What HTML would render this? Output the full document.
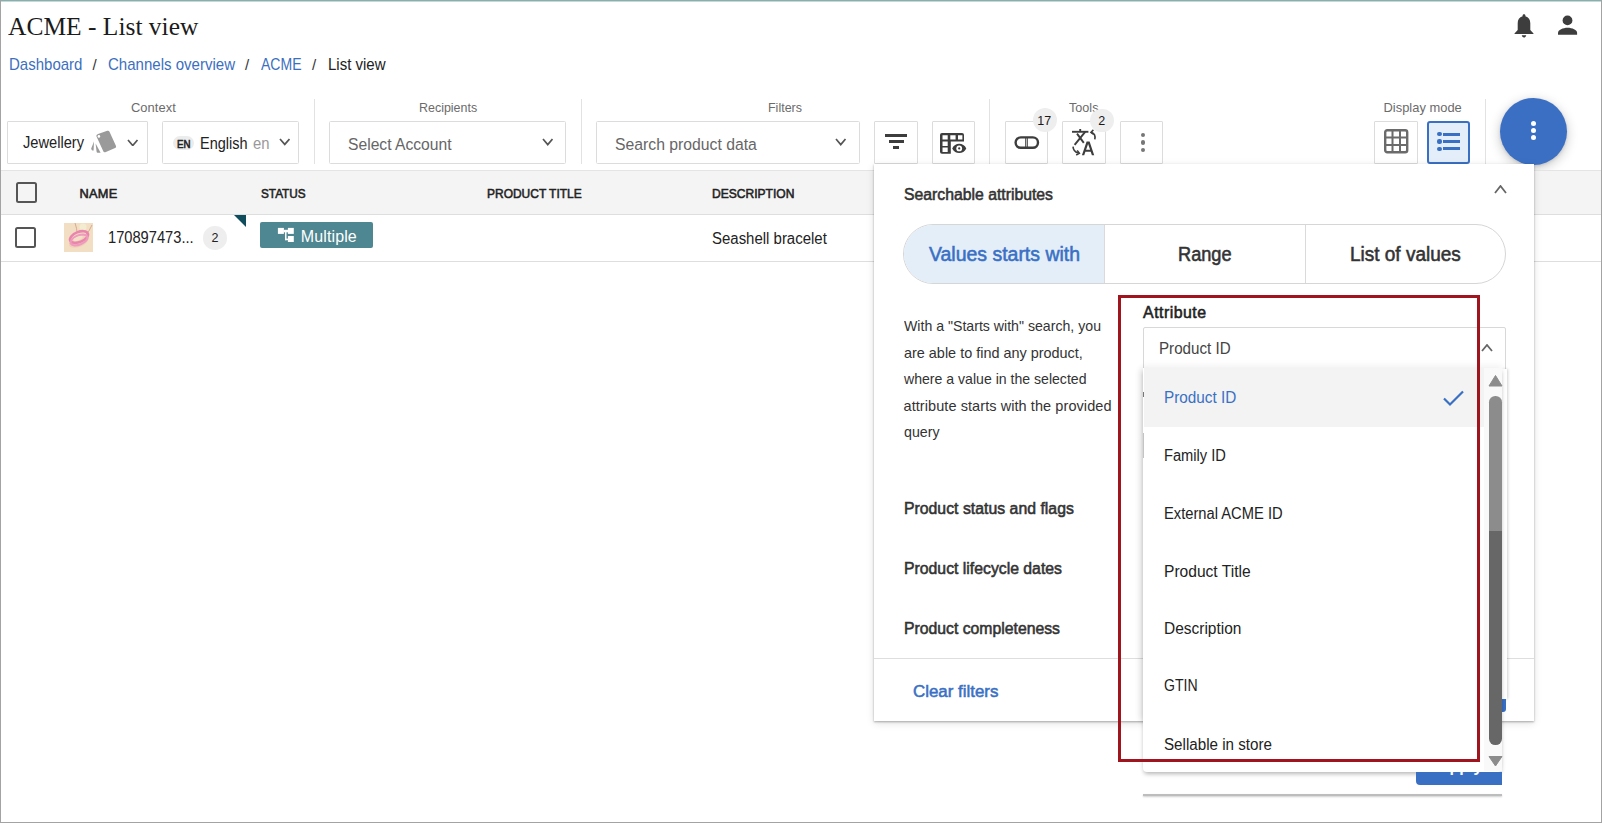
<!DOCTYPE html>
<html><head><meta charset="utf-8"><style>
html,body{margin:0;padding:0;}
body{width:1602px;height:823px;position:relative;overflow:hidden;background:#fff;font-family:"Liberation Sans", sans-serif;}
.t{position:absolute;white-space:nowrap;line-height:1;}
.r{position:absolute;}
#frame{position:absolute;left:0;top:0;width:1602px;height:823px;box-sizing:border-box;border:1px solid #a3a3a3;pointer-events:none;}
</style></head><body>
<div class="r" style="left:1px;top:1px;width:1600px;height:1px;background:#ade3e3"></div>
<div class="t" style="left:8px;top:14.01px;font-size:26.2px;color:#1b1b1b;font-family:'Liberation Serif', serif;transform:scaleX(0.9731);transform-origin:0 0;">ACME - List view</div>
<div class="t" style="left:8.5px;top:56.56px;font-size:15.7px;color:#3b6fc0;transform:scaleX(0.9569);transform-origin:0 0;">Dashboard</div>
<div class="t" style="left:92.5px;top:57.15px;font-size:15px;color:#333;">/</div>
<div class="t" style="left:108.4px;top:56.56px;font-size:15.7px;color:#3b6fc0;transform:scaleX(0.9589);transform-origin:0 0;">Channels overview</div>
<div class="t" style="left:245px;top:57.15px;font-size:15px;color:#333;">/</div>
<div class="t" style="left:261.4px;top:56.56px;font-size:15.7px;color:#3b6fc0;transform:scaleX(0.8950);transform-origin:0 0;">ACME</div>
<div class="t" style="left:312px;top:57.15px;font-size:15px;color:#333;">/</div>
<div class="t" style="left:328px;top:56.56px;font-size:15.7px;color:#222;transform:scaleX(0.9568);transform-origin:0 0;">List view</div>
<svg class="r" style="left:1510px;top:12px" width="28" height="28" viewBox="0 0 28 28"><path fill="#3d3d3d" d="M14 2.2c-0.9 0-1.4 0.6-1.4 1.4v0.7c-3.3 0.8-4.9 3.6-4.9 7v6.6l-3.2 3.6v0.5h19v-0.5l-3.2-3.6v-6.6c0-3.4-1.7-6.2-4.9-7v-0.7c0-0.8-0.5-1.4-1.4-1.4zM11.8 23.3c0 1.2 1 2.3 2.2 2.3s2.2-1.1 2.2-2.3z"/></svg>
<svg class="r" style="left:1556px;top:14px" width="24" height="24" viewBox="0 0 24 24"><circle cx="11.5" cy="6.4" r="4.9" fill="#3d3d3d"/><path fill="#3d3d3d" d="M2 20.8v-1.8c0-3 5-5.2 9.6-5.2s9.5 2.2 9.5 5.2v1.8z"/></svg>
<div class="t" style="left:131px;top:101.93px;font-size:12.9px;color:#6b6b6b;letter-spacing:0.057px;">Context</div>
<div class="t" style="left:418.7px;top:101.93px;font-size:12.9px;color:#6b6b6b;transform:scaleX(0.9663);transform-origin:0 0;">Recipients</div>
<div class="t" style="left:768.4px;top:101.93px;font-size:12.9px;color:#6b6b6b;transform:scaleX(0.9682);transform-origin:0 0;">Filters</div>
<div class="t" style="left:1069px;top:101.93px;font-size:12.9px;color:#6b6b6b;transform:scaleX(0.9796);transform-origin:0 0;">Tools</div>
<div class="t" style="left:1383.5px;top:101.63px;font-size:12.9px;color:#6b6b6b;letter-spacing:0.013px;">Display mode</div>
<div class="r" style="left:314px;top:99px;width:1px;height:65px;background:#e2e2e2"></div>
<div class="r" style="left:581px;top:99px;width:1px;height:65px;background:#e2e2e2"></div>
<div class="r" style="left:989px;top:99px;width:1px;height:65px;background:#e2e2e2"></div>
<div class="r" style="left:1485px;top:99px;width:1px;height:65px;background:#e2e2e2"></div>
<div class="r" style="left:7px;top:121px;width:141px;height:43px;border:1px solid #dcdcdc;box-sizing:border-box;border-radius:1px"></div>
<div class="t" style="left:23px;top:134.81px;font-size:16px;color:#222;transform:scaleX(0.9147);transform-origin:0 0;">Jewellery</div>
<svg class="r" style="left:85px;top:125px" width="35" height="32" viewBox="85 125 35 32"><g fill="#9a9a9a">
<path d="M98 133.9 L107.3 130.8 Q108.9 130.3 109.5 131.8 L116 146 Q116.6 147.5 115.1 148.1 L105.3 152.2 Q103.8 152.7 103.3 151.2 L96.4 136.2 Q95.9 134.6 98 133.9Z"/>
<path d="M95.6 143.5 L100.6 152.8 L97.6 152.8 Q96.8 152.6 96.6 151.8Z"/>
<path d="M94 141.5 L93.6 150.5 Q92.9 150.8 92 150.2 Q91 149.5 91.2 148.6Z"/>
</g><circle cx="98.9" cy="136.4" r="1.3" fill="#fff"/></svg>
<div class="r" style="left:162px;top:121px;width:137px;height:43px;border:1px solid #dcdcdc;box-sizing:border-box;border-radius:1.5px"></div>
<div class="r" style="left:173px;top:136px;width:21px;height:14px;background:#ececec;border-radius:7px"></div>
<div class="t" style="left:176.5px;top:138.98px;font-size:10.6px;color:#222;-webkit-text-stroke:0.55px currentColor;transform:scaleX(0.9168);transform-origin:0 0;">EN</div>
<div class="t" style="left:199.5px;top:135.81px;font-size:16px;color:#222;transform:scaleX(0.9051);transform-origin:0 0;">English</div>
<div class="t" style="left:252.5px;top:135.81px;font-size:16px;color:#999;transform:scaleX(0.9271);transform-origin:0 0;">en</div>
<div class="r" style="left:329px;top:121px;width:237px;height:43px;border:1px solid #dcdcdc;box-sizing:border-box;border-radius:1.5px"></div>
<div class="t" style="left:348.3px;top:136.05px;font-size:16.3px;color:#666;transform:scaleX(0.9617);transform-origin:0 0;">Select Account</div>
<div class="r" style="left:596px;top:121px;width:264px;height:43px;border:1px solid #dcdcdc;box-sizing:border-box;border-radius:1.5px"></div>
<div class="t" style="left:615px;top:135.95px;font-size:16.3px;color:#666;transform:scaleX(0.9673);transform-origin:0 0;">Search product data</div>
<svg class="r" style="left:127px;top:138.5px" width="11.5" height="7.5" viewBox="0 0 11.5 7.5"><path d="M1 1 L5.75 6.5 L10.5 1" fill="none" stroke="#555" stroke-width="1.7"/></svg>
<svg class="r" style="left:278.5px;top:138.2px" width="11.5" height="7.4" viewBox="0 0 11.5 7.4"><path d="M1 1 L5.75 6.4 L10.5 1" fill="none" stroke="#555" stroke-width="1.7"/></svg>
<svg class="r" style="left:541.8px;top:138.4px" width="11.5" height="7.6" viewBox="0 0 11.5 7.6"><path d="M1 1 L5.75 6.6 L10.5 1" fill="none" stroke="#555" stroke-width="1.7"/></svg>
<svg class="r" style="left:835.2px;top:138.1px" width="11.5" height="7.6" viewBox="0 0 11.5 7.6"><path d="M1 1 L5.75 6.6 L10.5 1" fill="none" stroke="#555" stroke-width="1.7"/></svg>
<div class="r" style="left:874px;top:121px;width:44px;height:43px;border:1px solid #dcdcdc;box-sizing:border-box;border-radius:1px"></div>
<div class="r" style="left:932px;top:121px;width:43px;height:43px;border:1px solid #dcdcdc;box-sizing:border-box;border-radius:1px"></div>
<div class="r" style="left:1005px;top:121px;width:43px;height:43px;border:1px solid #dcdcdc;box-sizing:border-box;border-radius:1px"></div>
<div class="r" style="left:1062px;top:121px;width:44px;height:43px;border:1px solid #dcdcdc;box-sizing:border-box;border-radius:1px"></div>
<div class="r" style="left:1120px;top:121px;width:43px;height:43px;border:1px solid #dcdcdc;box-sizing:border-box;border-radius:1px"></div>
<div class="r" style="left:1374px;top:121px;width:44px;height:43px;border:1px solid #dcdcdc;box-sizing:border-box;border-radius:1px"></div>
<div class="r" style="left:1427px;top:121px;width:43px;height:43px;border:2px solid #3a70c4;box-sizing:border-box;border-radius:3px;background:#e4eefa"></div>
<div class="r" style="left:885px;top:134px;width:22px;height:2.6px;background:#3d3d3d"></div>
<div class="r" style="left:888.5px;top:140.2px;width:15px;height:2.6px;background:#3d3d3d"></div>
<div class="r" style="left:893.3px;top:146.4px;width:5.5px;height:2.6px;background:#3d3d3d"></div>
<svg class="r" style="left:940px;top:133px" width="28" height="21" viewBox="0 0 28 21">
<path fill="#3d3d3d" d="M2 0h20a2 2 0 0 1 2 2v6.5h-13.2v12.3h-8.8a2 2 0 0 1-2-2v-16.8a2 2 0 0 1 2-2z M2.5 2.2v4.3h5.2v-4.3z M10.3 2.2v4.3h5.3v-4.3z M18 2.2v4.3h4.4v-4.3z M2.5 8.6v4.3h5.2v-4.3z M2.5 14.6v4.3h5.2v-4.3z"/>
<path fill="#3d3d3d" d="M12.2 15.4c1.5-3 4-4.6 7-4.6s5.6 1.6 7.1 4.6c-1.5 3-4.1 4.6-7.1 4.6s-5.5-1.6-7-4.6z"/>
<circle cx="19.2" cy="15.4" r="2.9" fill="#fff"/><circle cx="19.2" cy="15.4" r="1.1" fill="#3d3d3d"/>
</svg>
<svg class="r" style="left:1013px;top:135px" width="27" height="15" viewBox="0 0 27 15"><rect x="2.6" y="2.4" width="22.4" height="10.4" rx="5.2" fill="none" stroke="#3d3d3d" stroke-width="2.4"/><rect x="12.2" y="2" width="1" height="11" fill="#3d3d3d"/><rect x="13.8" y="2" width="1" height="11" fill="#3d3d3d"/></svg>
<svg class="r" style="left:1060px;top:105px" width="60" height="60" viewBox="1060 105 60 60">
<g fill="none" stroke="#3d3d3d" stroke-width="1.9" stroke-linecap="butt">
<path d="M1072 131.8h16.4"/><path d="M1080.2 129v2.8"/>
<path d="M1085.2 131.8L1074.6 144.8"/><path d="M1077 133.6L1083.8 142.9"/>
<path d="M1091.4 132.4c2.6 0.8 4.2 3.2 3.4 6.9" stroke-width="1.6"/>
<path d="M1073 146.6c0.2 3.2 2.4 5.6 5.6 6.5" stroke-width="1.6"/>
</g>
<path fill="none" stroke="#3d3d3d" stroke-width="1.5" d="M1093.4 129.9L1090.9 132.4L1093.6 134.4"/>
<path fill="none" stroke="#3d3d3d" stroke-width="1.5" d="M1077.2 150.4L1079.4 153.3L1076.2 155"/>
<path fill="#3d3d3d" d="M1086.6 141.4h3l4.6 13.9h-2.3l-1.2 -3.6h-5.3l-1.2 3.6h-2.3zM1088.1 144.1l-2 5.7h4z"/>
</svg>
<div class="r" style="left:1140.8px;top:133.0px;width:4.4px;height:4.4px;background:#777;border-radius:50%"></div>
<div class="r" style="left:1140.8px;top:140.3px;width:4.4px;height:4.4px;background:#777;border-radius:50%"></div>
<div class="r" style="left:1140.8px;top:147.60000000000002px;width:4.4px;height:4.4px;background:#777;border-radius:50%"></div>
<div class="r" style="left:1032.5px;top:108.3px;width:24px;height:24px;background:#eeeeee;border-radius:50%"></div>
<div class="t" style="left:1037.3px;top:114.77px;font-size:12.5px;color:#1a1a1a;">17</div>
<div class="r" style="left:1090px;top:108.8px;width:23.6px;height:23.6px;background:#eeeeee;border-radius:50%"></div>
<div class="t" style="left:1098.2px;top:114.77px;font-size:12.5px;color:#1a1a1a;">2</div>
<svg class="r" style="left:1384px;top:129px" width="25" height="25" viewBox="0 0 25 25"><rect x="1.2" y="1.2" width="22" height="22" rx="2" fill="none" stroke="#6b6b6b" stroke-width="2.4"/><path d="M8.5 1v23M16 1v23M1 8.5h23M1 16h23" stroke="#6b6b6b" stroke-width="2"/></svg>
<div class="r" style="left:1437.4px;top:132.2px;width:4.2px;height:4.2px;background:#3a70c4;border-radius:50%"></div>
<div class="r" style="left:1443px;top:132.89999999999998px;width:17px;height:2.7px;background:#3a70c4"></div>
<div class="r" style="left:1437.4px;top:139.4px;width:4.2px;height:4.2px;background:#3a70c4;border-radius:50%"></div>
<div class="r" style="left:1443px;top:140.1px;width:17px;height:2.7px;background:#3a70c4"></div>
<div class="r" style="left:1437.4px;top:146.7px;width:4.2px;height:4.2px;background:#3a70c4;border-radius:50%"></div>
<div class="r" style="left:1443px;top:147.39999999999998px;width:17px;height:2.7px;background:#3a70c4"></div>
<div class="r" style="left:1499.5px;top:97.5px;width:67px;height:67px;background:#3a6fc4;border-radius:50%;box-shadow:0 3px 12px rgba(0,0,0,0.22),0 1px 3px rgba(0,0,0,0.12)"></div>
<div class="r" style="left:1530.9px;top:120.9px;width:5px;height:5px;background:#fff;border-radius:50%"></div>
<div class="r" style="left:1530.9px;top:128.1px;width:5px;height:5px;background:#fff;border-radius:50%"></div>
<div class="r" style="left:1530.9px;top:135.3px;width:5px;height:5px;background:#fff;border-radius:50%"></div>
<div class="r" style="left:1px;top:170px;width:1600px;height:45px;background:#f4f4f4;border-top:1px solid #e4e4e4;border-bottom:1px solid #dedede;box-sizing:border-box"></div>
<div class="r" style="left:1px;top:260.5px;width:1600px;height:1px;background:#dedede"></div>
<div class="r" style="left:16px;top:182px;width:20.5px;height:20.5px;border:2px solid #555;box-sizing:border-box;border-radius:2.5px"></div>
<div class="r" style="left:15px;top:227px;width:21px;height:21px;border:2px solid #555;box-sizing:border-box;border-radius:2.5px"></div>
<div class="t" style="left:79.6px;top:187.51px;font-size:12.8px;color:#222;-webkit-text-stroke:0.55px currentColor;letter-spacing:0.239px;">NAME</div>
<div class="t" style="left:260.7px;top:187.51px;font-size:12.8px;color:#222;-webkit-text-stroke:0.55px currentColor;transform:scaleX(0.9178);transform-origin:0 0;">STATUS</div>
<div class="t" style="left:486.8px;top:187.51px;font-size:12.8px;color:#222;-webkit-text-stroke:0.55px currentColor;transform:scaleX(0.9355);transform-origin:0 0;">PRODUCT TITLE</div>
<div class="t" style="left:712.2px;top:187.51px;font-size:12.8px;color:#222;-webkit-text-stroke:0.55px currentColor;transform:scaleX(0.9420);transform-origin:0 0;">DESCRIPTION</div>
<svg class="r" style="left:64px;top:223px" width="29" height="29" viewBox="0 0 29 29"><rect width="29" height="29" fill="#f2dfc3"/>
<path d="M11 0 Q13 6 13 9 M28 2 Q25 9 22 11" stroke="#d9a98f" stroke-width="1" fill="none"/>
<circle cx="19" cy="4" r="3.5" fill="#f3ecd0"/>
<ellipse cx="14.5" cy="19" rx="10" ry="5" fill="#f0c9b0" transform="rotate(-20 14.5 19)" opacity="0.7"/>
<ellipse cx="15" cy="14" rx="9.5" ry="5" fill="none" stroke="#ea86ad" stroke-width="2.6" transform="rotate(-22 15 14)"/>
<ellipse cx="15" cy="17" rx="9" ry="4.6" fill="none" stroke="#ee9bbd" stroke-width="2.2" transform="rotate(-22 15 17)"/>
<ellipse cx="14" cy="15.5" rx="5" ry="1.8" fill="#f3e0c8" transform="rotate(-22 14 15.5)"/>
</svg>
<div class="t" style="left:108.4px;top:229.81px;font-size:16px;color:#222;transform:scaleX(0.9163);transform-origin:0 0;">170897473...</div>
<div class="r" style="left:203px;top:226.2px;width:23.6px;height:23.6px;background:#eeeeee;border-radius:50%"></div>
<div class="t" style="left:211.5px;top:232.27px;font-size:12.5px;color:#222;">2</div>
<svg class="r" style="left:234px;top:215px" width="12" height="12" viewBox="0 0 12 12"><path d="M0 0H12V12Z" fill="#0f4d5c"/></svg>
<div class="r" style="left:260px;top:222px;width:113px;height:25.6px;background:#4e8691;border-radius:2px"></div>
<svg class="r" style="left:270px;top:220px" width="30" height="30" viewBox="270 220 30 30"><g fill="#fff"><rect x="277.9" y="227.9" width="6" height="6"/><rect x="287.9" y="227.9" width="5.9" height="6"/><rect x="283.5" y="229.8" width="4.8" height="2.5"/><rect x="285" y="232" width="1.5" height="8.2"/><rect x="285" y="238.6" width="3.5" height="1.6"/><rect x="287.9" y="236" width="5.9" height="6"/></g></svg>
<div class="t" style="left:300.75px;top:228.81px;font-size:16px;color:#ffffff;letter-spacing:0.124px;">Multiple</div>
<div class="t" style="left:712.2px;top:231.11px;font-size:16px;color:#222;transform:scaleX(0.9353);transform-origin:0 0;">Seashell bracelet</div>
<div class="r" style="left:874px;top:164px;width:660px;height:557px;background:#fff;box-shadow:0 1px 2px rgba(0,0,0,0.3),0 2px 8px rgba(0,0,0,0.12)"></div>
<div class="t" style="left:903.7px;top:186.78px;font-size:15.8px;color:#333;-webkit-text-stroke:0.55px currentColor;transform:scaleX(0.9979);transform-origin:0 0;">Searchable attributes</div>
<svg class="r" style="left:1494px;top:185px" width="13" height="9" viewBox="0 0 13 9"><path d="M1 8 L6.5 1 L12 8" fill="none" stroke="#666" stroke-width="1.8"/></svg>
<div class="r" style="left:903px;top:224px;width:603px;height:60px;border:1px solid #d6d6d6;box-sizing:border-box;border-radius:30px;overflow:hidden"></div>
<div class="r" style="left:904px;top:225px;width:200px;height:58px;background:#e3eef9;border-radius:29px 0 0 29px"></div>
<div class="r" style="left:1104px;top:225px;width:1px;height:58px;background:#dadada"></div>
<div class="r" style="left:1304.5px;top:225px;width:1px;height:58px;background:#dadada"></div>
<div class="t" style="left:928.7px;top:245.14px;font-size:19.5px;color:#3a70c4;-webkit-text-stroke:0.55px currentColor;transform:scaleX(0.9976);transform-origin:0 0;">Values starts with</div>
<div class="t" style="left:1177.6px;top:245.14px;font-size:19.5px;color:#333;-webkit-text-stroke:0.55px currentColor;transform:scaleX(0.9328);transform-origin:0 0;">Range</div>
<div class="t" style="left:1349.6px;top:245.14px;font-size:19.5px;color:#333;-webkit-text-stroke:0.55px currentColor;transform:scaleX(0.9735);transform-origin:0 0;">List of values</div>
<div class="t" style="left:903.5px;top:318.98px;font-size:14.5px;color:#333;transform:scaleX(0.9748);transform-origin:0 0;">With a "Starts with" search, you</div>
<div class="t" style="left:903.5px;top:345.78px;font-size:14.5px;color:#333;transform:scaleX(0.9947);transform-origin:0 0;">are able to find any product,</div>
<div class="t" style="left:903.5px;top:372.08px;font-size:14.5px;color:#333;transform:scaleX(0.9717);transform-origin:0 0;">where a value in the selected</div>
<div class="t" style="left:903.5px;top:398.88px;font-size:14.5px;color:#333;letter-spacing:0.075px;">attribute starts with the provided</div>
<div class="t" style="left:903.5px;top:425.08px;font-size:14.5px;color:#333;transform:scaleX(0.9787);transform-origin:0 0;">query</div>
<div class="t" style="left:903.9px;top:500.88px;font-size:15.8px;color:#333;-webkit-text-stroke:0.55px currentColor;letter-spacing:0.021px;">Product status and flags</div>
<div class="t" style="left:903.9px;top:560.98px;font-size:15.8px;color:#333;-webkit-text-stroke:0.55px currentColor;transform:scaleX(0.9995);transform-origin:0 0;">Product lifecycle dates</div>
<div class="t" style="left:903.9px;top:620.58px;font-size:15.8px;color:#333;-webkit-text-stroke:0.55px currentColor;transform:scaleX(0.9979);transform-origin:0 0;">Product completeness</div>
<div class="r" style="left:874px;top:658px;width:660px;height:1px;background:#dedede"></div>
<div class="t" style="left:913.4px;top:682.76px;font-size:17px;color:#3a70c4;-webkit-text-stroke:0.55px currentColor;transform:scaleX(0.9934);transform-origin:0 0;">Clear filters</div>
<div class="t" style="left:1143.1px;top:304.79px;font-size:15.9px;color:#222;-webkit-text-stroke:0.55px currentColor;letter-spacing:0.473px;">Attribute</div>
<div class="r" style="left:1143px;top:327px;width:363px;height:45px;border:1px solid #d8d8d8;box-sizing:border-box;border-radius:2px"></div>
<div class="t" style="left:1159.4px;top:341.04px;font-size:15.6px;color:#444;transform:scaleX(0.9715);transform-origin:0 0;">Product ID</div>
<svg class="r" style="left:1480.5px;top:344px" width="12" height="8" viewBox="0 0 12 8"><path d="M1 7 L6.0 1 L11 7" fill="none" stroke="#666" stroke-width="1.8"/></svg>
<div class="r" style="left:1502px;top:369px;width:5px;height:330px;background:#fff;box-shadow:1px 0 3px rgba(0,0,0,0.18)"></div>
<div class="r" style="left:1430px;top:699px;width:76px;height:12.7px;background:#3a70c4;border-radius:0 0 3px 3px"></div>
<div class="r" style="left:1143px;top:369px;width:3px;height:351px;background:#fff;box-shadow:-2px 0 6px rgba(0,0,0,0.2)"></div>
<div class="r" style="left:1143px;top:368px;width:359px;height:432px;background:#fff"></div>
<div class="r" style="left:1143px;top:368px;width:359px;height:403.5px;background:#fff;border-radius:0 0 4px 4px;box-shadow:0 3px 4px -1px rgba(0,0,0,0.28),0 -3px 6px rgba(0,0,0,0.05)"></div>
<div class="r" style="left:1143.5px;top:368px;width:341px;height:59px;background:#f3f3f3"></div>
<div class="r" style="left:1484px;top:368px;width:18px;height:403px;background:#f9f9f9"></div>
<div class="t" style="left:1163.7px;top:390.41px;font-size:16px;color:#3a70c4;transform:scaleX(0.9565);transform-origin:0 0;">Product ID</div>
<div class="t" style="left:1163.7px;top:448.31px;font-size:16px;color:#222;transform:scaleX(0.9163);transform-origin:0 0;">Family ID</div>
<div class="t" style="left:1163.7px;top:506.31px;font-size:16px;color:#222;transform:scaleX(0.9199);transform-origin:0 0;">External ACME ID</div>
<div class="t" style="left:1163.7px;top:563.51px;font-size:16px;color:#222;transform:scaleX(0.9738);transform-origin:0 0;">Product Title</div>
<div class="t" style="left:1163.7px;top:621.31px;font-size:16px;color:#222;transform:scaleX(0.9671);transform-origin:0 0;">Description</div>
<div class="t" style="left:1163.7px;top:678.21px;font-size:16px;color:#222;transform:scaleX(0.8791);transform-origin:0 0;">GTIN</div>
<div class="t" style="left:1163.7px;top:736.51px;font-size:16px;color:#222;transform:scaleX(0.9486);transform-origin:0 0;">Sellable in store</div>
<div class="r" style="left:1142.5px;top:392px;width:1.2px;height:5px;background:#777"></div>
<div class="r" style="left:1143px;top:433px;width:1px;height:25px;background:#c4c4c4"></div>
<svg class="r" style="left:1442px;top:389px" width="23" height="18" viewBox="0 0 23 18"><path d="M2 9.5l6 6 13-13" fill="none" stroke="#3a70c4" stroke-width="2.2"/></svg>
<svg class="r" style="left:1488px;top:374px" width="15" height="13" viewBox="0 0 15 13"><path d="M7.5 1.5L14 12H1z" fill="#8c8c8c" stroke="#8c8c8c" stroke-width="1" stroke-linejoin="round"/></svg>
<div class="r" style="left:1489.3px;top:396px;width:12.7px;height:135px;background:#8c8c8c;border-radius:6.3px 6.3px 0 0"></div>
<div class="r" style="left:1489.3px;top:531px;width:12.7px;height:214px;background:#676767;border-radius:0 0 6.3px 6.3px"></div>
<svg class="r" style="left:1488px;top:755px" width="15" height="12" viewBox="0 0 15 12"><path d="M1 1.5H14L7.5 11z" fill="#8c8c8c" stroke="#8c8c8c" stroke-width="1" stroke-linejoin="round"/></svg>
<div class="r" style="left:1416px;top:771.5px;width:86px;height:13.5px;background:#3a70c4;border-radius:0 0 0 4px;overflow:hidden"><div class="t" style="left:22px;top:-13px;font-size:16px;font-weight:bold;color:#fff">Apply</div></div>
<div class="r" style="left:1143px;top:794px;width:359px;height:1.5px;background:#bdbdbd;box-shadow:0 1px 2px rgba(0,0,0,0.2)"></div>
<div class="r" style="left:1118px;top:295px;width:362px;height:467px;border:3px solid #a0141e;box-sizing:border-box"></div>
<div id="frame"></div>
</body></html>
